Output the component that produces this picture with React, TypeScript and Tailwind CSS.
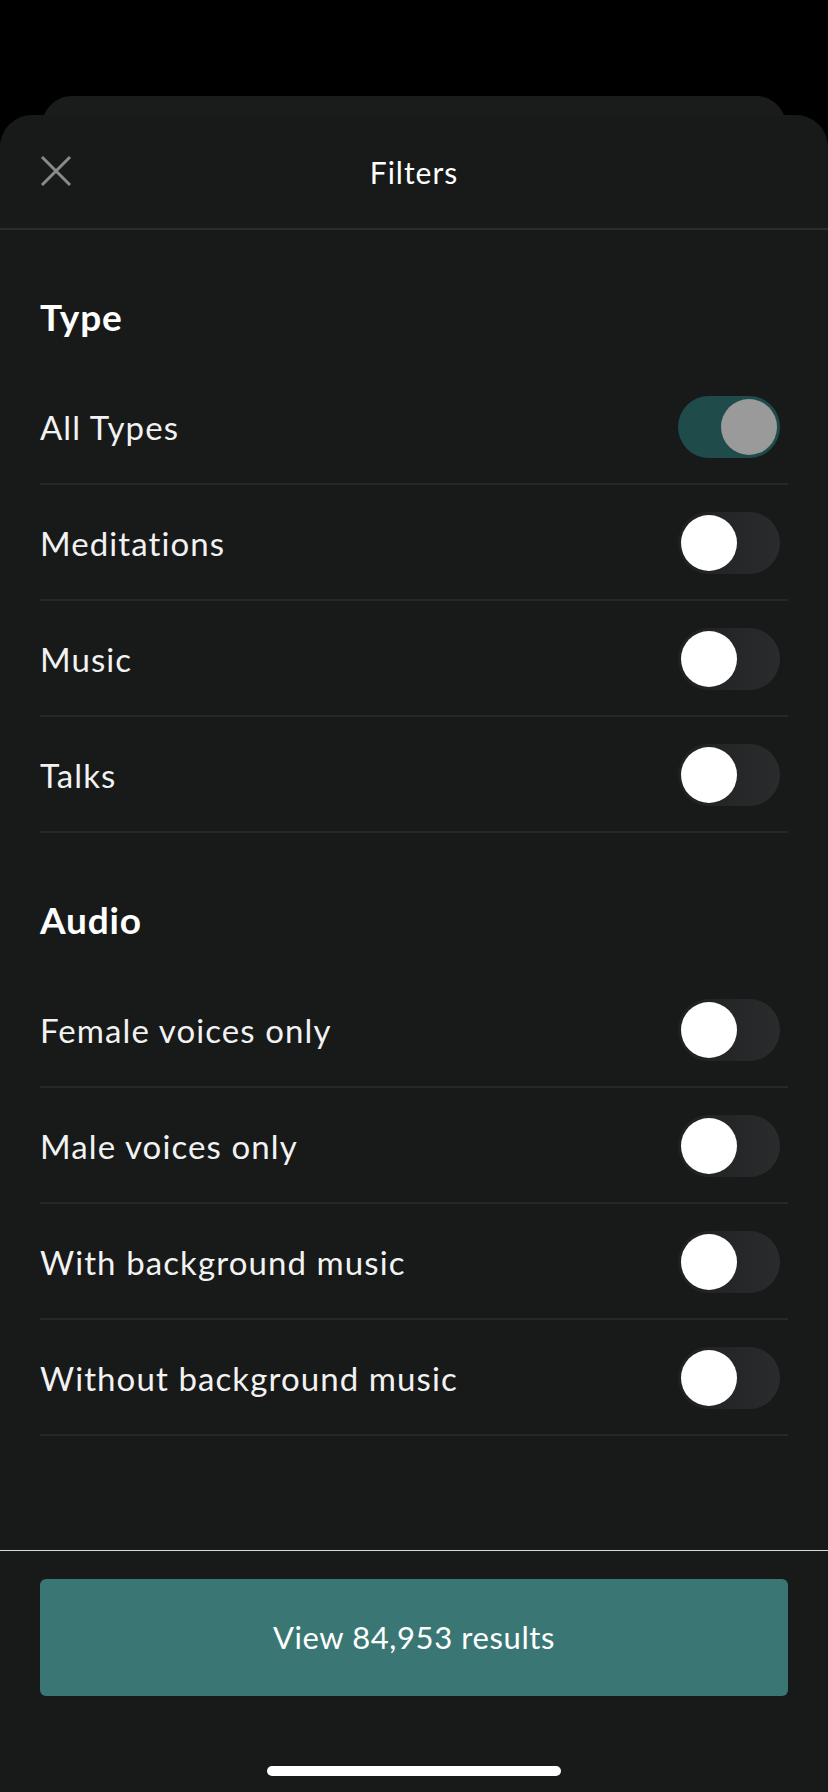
import React from "react";

function Toggle({ on }: { on: boolean }) {
  if (on) {
    return (
      <div className="flex h-[62px] w-[102px] items-center justify-end rounded-full bg-[#1f4c4a] pr-[3px]">
        <div className="h-[56px] w-[56px] rounded-full bg-[#9a9a9a]" />
      </div>
    );
  }
  return (
    <div className="flex h-[62px] w-[102px] items-center justify-start rounded-full bg-gradient-to-r from-[#1f2121] to-[#2a2b2d] pl-[3px]">
      <div className="h-[56px] w-[56px] rounded-full bg-white" />
    </div>
  );
}

function Row({ label, on }: { label: string; on?: boolean }) {
  return (
    <div className="flex h-[116px] items-center justify-between border-b-2 border-[#262828] pt-[2px]">
      <span className="text-[33px] leading-none tracking-[1.1px] text-[#f2f2f2]">{label}</span>
      <div className="mr-[8px]">
        <Toggle on={!!on} />
      </div>
    </div>
  );
}

function Heading({ children }: { children: React.ReactNode }) {
  return (
    <div className="mt-[66px] mb-[35px] flex h-[40px] items-center text-[37px] font-bold leading-none tracking-[0.8px] text-white">
      {children}
    </div>
  );
}

export default function App() {
  return (
    <div
      className="flex h-[1792px] w-[828px] flex-col overflow-hidden bg-black pt-[96px]"
      style={{ fontFamily: "Lato, 'Noto Sans', sans-serif" }}
    >
      <div className="mx-[42px] h-[50px] shrink-0 rounded-t-[30px] bg-[#1a1c1c]" />
      <div className="relative -mt-[31px] flex flex-1 flex-col rounded-t-[32px] bg-[#181a1a]">
        <div className="grid h-[115px] shrink-0 grid-cols-[1fr_auto_1fr] items-center border-b-2 border-[#2b2d2d] px-[40px]">
          <div className="flex items-center">
            <svg width="32" height="32" viewBox="0 0 32 32" className="-mt-[2px]">
              <path d="M2 2 L30 30 M30 2 L2 30" stroke="#8a8a8a" strokeWidth="3" strokeLinecap="butt" />
            </svg>
          </div>
          <div className="text-[30px] leading-none tracking-[1px] text-white">Filters</div>
          <div />
        </div>

        <div className="flex-1 px-[40px]">
          <Heading>Type</Heading>
          <div className="-mt-[2px]">
            <Row label="All Types" on />
            <Row label="Meditations" />
            <Row label="Music" />
            <Row label="Talks" />
          </div>
          <Heading>Audio</Heading>
          <div className="-mt-[2px]">
            <Row label="Female voices only" />
            <Row label="Male voices only" />
            <Row label="With background music" />
            <Row label="Without background music" />
          </div>
        </div>

        <div className="flex shrink-0 flex-col items-center border-t border-[#d9d9d9] px-[40px] pt-[28px] pb-[16px]">
          <button className="flex h-[117px] w-full items-center justify-center rounded-[6px] bg-[#3a7774] text-[31px] leading-none tracking-[0.6px] text-white">
            View 84,953 results
          </button>
          <div className="mt-[70px] h-[10px] w-[294px] rounded-full bg-white" />
        </div>
      </div>
    </div>
  );
}
